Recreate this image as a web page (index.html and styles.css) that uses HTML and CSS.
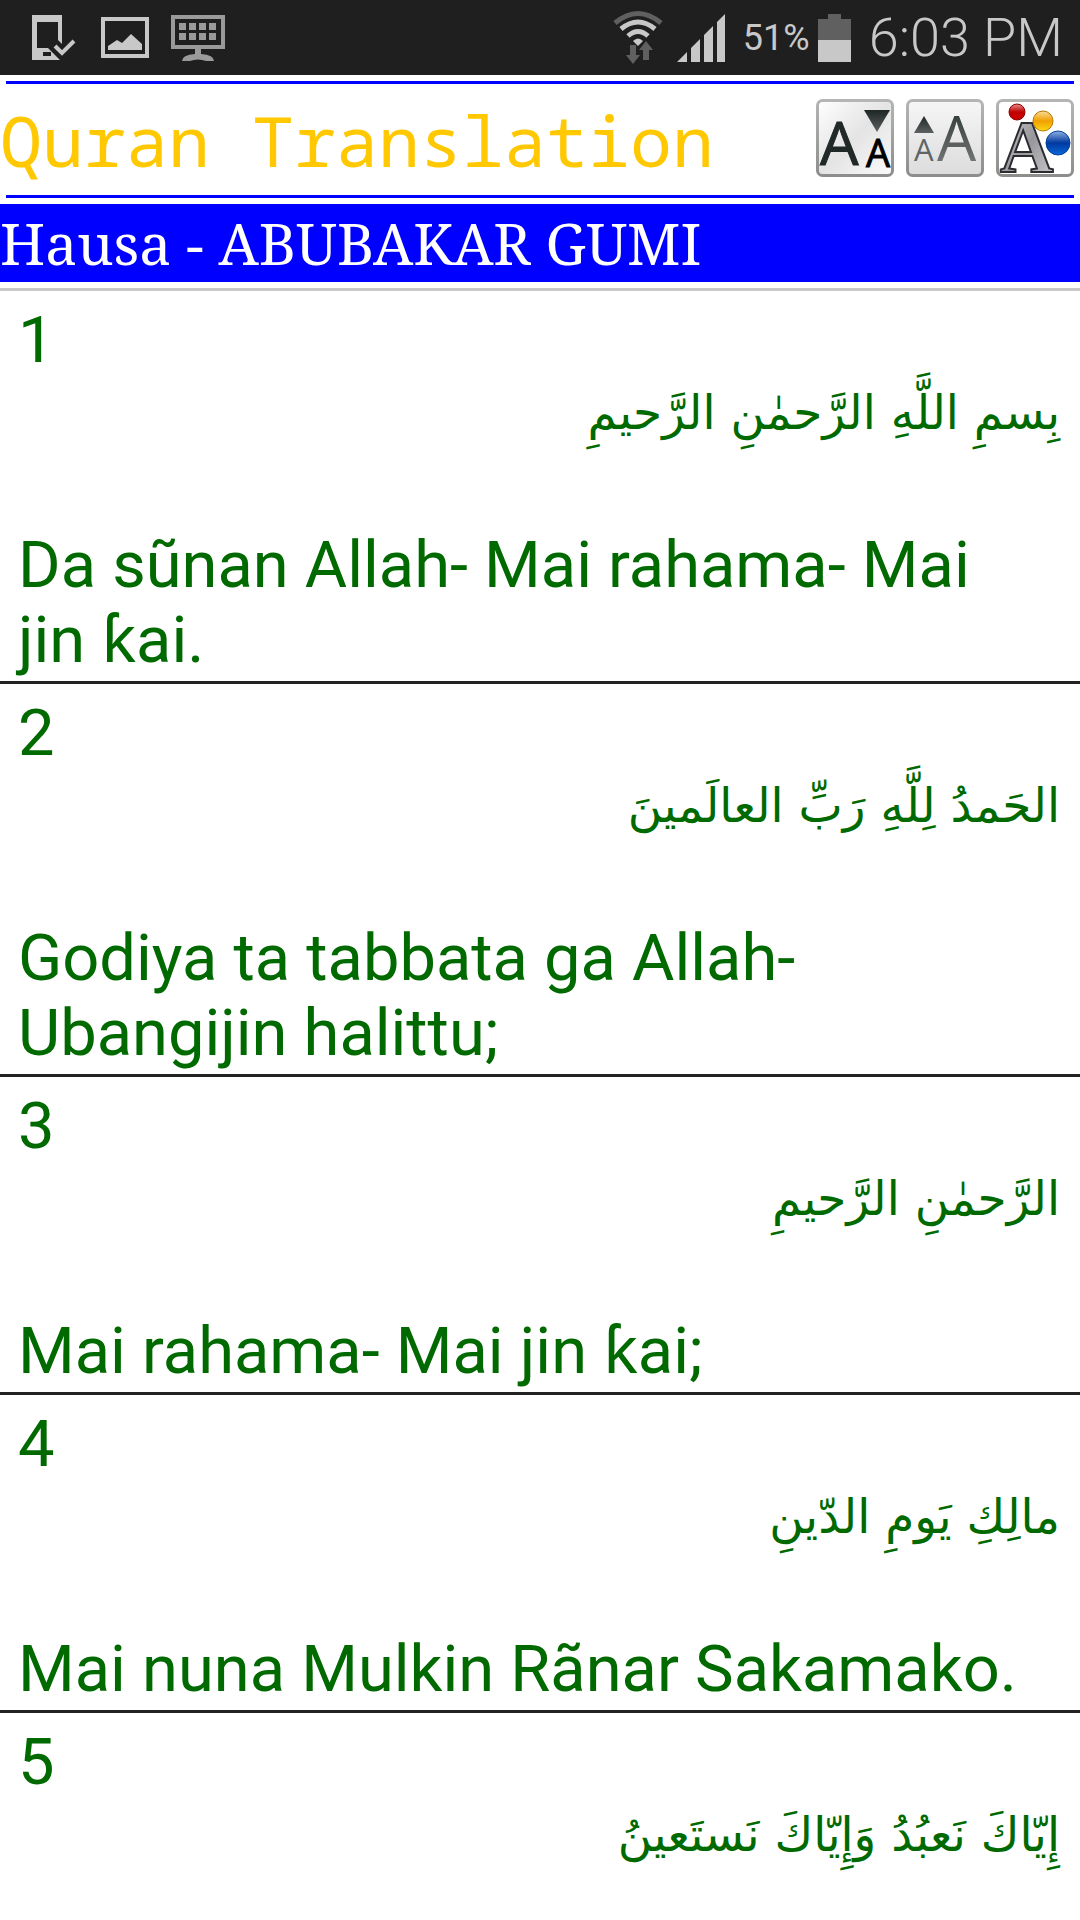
FILE: index.html
```html
<!DOCTYPE html>
<html lang="ha">
<head>
<meta charset="utf-8">
<meta name="viewport" content="width=device-width, initial-scale=1">
<title>Quran Translation</title>
<link rel="stylesheet" href="styles.css">
</head>
<body>
<div class="status">
  <div class="status-group notices">
    <svg width="47" height="46" viewBox="0 0 47 46" aria-hidden="true">
      <path fill="#c8c8c8" fill-rule="evenodd" d="M0 0H30V29L26 25V7H5V33H16L28 45H0ZM11 37V41H19V37Z"/>
      <path fill="none" stroke="#c8c8c8" stroke-width="4" d="M23 31L30 38L42 26"/>
    </svg>
    <svg width="48" height="41" viewBox="0 0 48 41" aria-hidden="true">
      <path fill="#c8c8c8" fill-rule="evenodd" d="M0 0H48V41H0ZM4 4V37H44V4Z"/>
      <path fill="#c8c8c8" d="M7 33V29L16 23L21 26L30 17L41 27V33Z"/>
    </svg>
    <svg width="54" height="46" viewBox="0 0 54 46" aria-hidden="true">
      <path fill="#9a9a9a" fill-rule="evenodd" d="M0 0H54V34H30V39Q43 40 43 46H35Q27 43 19 46H11Q11 40 24 39V34H0ZM4 4V30H50V4Z"/>
      <path fill="#9a9a9a" d="M8 8h7v7h-7zM18 8h7v7h-7zM28 8h7v7h-7zM38 8h7v7h-7zM8 18h7v7h-7zM18 18h7v7h-7zM28 18h7v7h-7zM38 18h7v7h-7z"/>
    </svg>
  </div>
  <div class="status-group">
    <svg class="wifi" width="50" height="54" viewBox="0 0 50 54" aria-hidden="true">
      <path fill="none" stroke="#606060" stroke-width="5" d="M2 12Q25 -7 48 12"/>
      <g fill="none" stroke="#c8c8c8" stroke-width="5">
        <path d="M8 18Q25 4 42 18"/>
        <path d="M15 25Q25 16 35 25"/>
      </g>
      <path fill="#c8c8c8" d="M20 30Q25 25 30 30L25 35Z"/>
      <path fill="#606060" d="M17 34H23V44H27L20 53L13 44H17ZM30 49V39H26L33 30L40 39H36V49Z"/>
    </svg>
    <svg class="signal" width="48" height="48" viewBox="0 0 48 48" aria-hidden="true">
      <path fill="#c8c8c8" d="M0 48L10 38V48ZM14 48V34L23 25V48ZM27 48V21L36 12V48ZM40 48V8L48 0V48Z"/>
    </svg>
    <span class="percent">51%</span>
    <svg class="battery" width="33" height="48" viewBox="0 0 33 48" aria-hidden="true">
      <path fill="#606060" d="M0 5H10V0H23V5H33V26H0Z"/>
      <path fill="#c8c8c8" d="M0 26H33V48H0Z"/>
    </svg>
    <time class="clock">6:03 PM</time>
  </div>
</div>

<header class="header">
  <h1 class="title">Quran Translation</h1>
  <div class="tools">
    <button class="tool" type="button" aria-label="Smaller text">
      <svg width="78" height="78" viewBox="0 0 78 78" aria-hidden="true">
        <defs>
          <linearGradient id="rim" x1="0" y1="0" x2="0" y2="1"><stop offset="0" stop-color="#b4b6b4"/><stop offset="1" stop-color="#8c8e8c"/></linearGradient>
          <linearGradient id="face" x1="0" y1="0" x2="0" y2="1"><stop offset="0" stop-color="#f6f6f6"/><stop offset="1" stop-color="#dcdcdc"/></linearGradient>
          <linearGradient id="shine" x1="0" y1="0" x2="1" y2="1"><stop offset="0" stop-color="#ffffff"/><stop offset="0.5" stop-color="#e4e4e4"/><stop offset="1" stop-color="#fbfbfb"/></linearGradient>
          <linearGradient id="arrow" x1="0" y1="0" x2="0" y2="1"><stop offset="0" stop-color="#1e2626"/><stop offset="1" stop-color="#5c6060"/></linearGradient>
          <linearGradient id="fade" x1="0" y1="0" x2="0" y2="1"><stop offset="0" stop-color="#1e2828"/><stop offset="1" stop-color="#868886"/></linearGradient>
          <linearGradient id="metal" x1="0" y1="0" x2="1" y2="1"><stop offset="0" stop-color="#d8d8da"/><stop offset="0.5" stop-color="#98989c"/><stop offset="1" stop-color="#d0d0d2"/></linearGradient>
          <linearGradient id="red" x1="0" y1="0" x2="0" y2="1"><stop offset="0" stop-color="#e89090"/><stop offset="0.5" stop-color="#c00000"/><stop offset="1" stop-color="#d00000"/></linearGradient>
          <linearGradient id="gold" x1="0" y1="0" x2="0" y2="1"><stop offset="0" stop-color="#f8dc98"/><stop offset="0.5" stop-color="#f0a000"/><stop offset="1" stop-color="#ffd818"/></linearGradient>
          <linearGradient id="blue" x1="0" y1="0" x2="0" y2="1"><stop offset="0" stop-color="#90b0e0"/><stop offset="0.5" stop-color="#0038a0"/><stop offset="1" stop-color="#0868d8"/></linearGradient>
        </defs>
        <rect x="1.500" y="1.500" width="75" height="75" rx="5" fill="url(#shine)" stroke="url(#rim)" stroke-width="3"/>
        <text class="glyph" x="4" y="66" font-size="61" fill="#202828" stroke="#202828">A</text>
        <text class="glyph" x="50" y="68" font-size="38" fill="#000000" stroke="#000000">A</text>
        <path fill="url(#arrow)" d="M48 11H74L61 33Z"/>
      </svg>
    </button>
    <button class="tool" type="button" aria-label="Larger text">
      <svg width="78" height="78" viewBox="0 0 78 78" aria-hidden="true">
        <rect x="1.500" y="1.500" width="75" height="75" rx="5" fill="url(#face)" stroke="url(#rim)" stroke-width="3"/>
        <text class="glyph" x="8" y="62" font-size="31" fill="#606464">A</text>
        <text class="glyph" x="31" y="62" font-size="62" fill="url(#fade)">A</text>
        <path fill="url(#arrow)" d="M8 34H28L18 17Z"/>
      </svg>
    </button>
    <button class="tool" type="button" aria-label="Text colour">
      <svg width="78" height="78" viewBox="0 0 78 78" aria-hidden="true">
        <rect x="1.500" y="1.500" width="75" height="75" rx="5" fill="#ffffff" stroke="url(#rim)" stroke-width="3"/>
        <text class="serif-glyph" x="4" y="73" font-size="74" fill="url(#metal)" stroke="#2c2c30" stroke-width="2">A</text>
        <circle cx="47" cy="22" r="10" fill="url(#gold)" stroke="#b87800" stroke-width="1"/>
        <circle cx="21" cy="13" r="8" fill="url(#red)" stroke="#900000" stroke-width="1"/>
        <circle cx="62" cy="44" r="12" fill="url(#blue)" stroke="#0040a0" stroke-width="1"/>
      </svg>
    </button>
  </div>
</header>

<h2 class="translator">Hausa - ABUBAKAR GUMI</h2>

<main class="verses">
  <article class="verse">
    <p class="number">1</p>
    <p class="arabic" lang="ar" dir="rtl">بِسمِ اللَّهِ الرَّحمٰنِ الرَّحيمِ</p>
    <p class="text">Da sũnan Allah- Mai rahama- Mai jin ƙai.</p>
  </article>
  <article class="verse">
    <p class="number">2</p>
    <p class="arabic" lang="ar" dir="rtl">الحَمدُ لِلَّهِ رَبِّ العالَمينَ</p>
    <p class="text">Godiya ta tabbata ga Allah- Ubangijin halittu;</p>
  </article>
  <article class="verse">
    <p class="number">3</p>
    <p class="arabic" lang="ar" dir="rtl">الرَّحمٰنِ الرَّحيمِ</p>
    <p class="text">Mai rahama- Mai jin ƙai;</p>
  </article>
  <article class="verse">
    <p class="number">4</p>
    <p class="arabic" lang="ar" dir="rtl">مالِكِ يَومِ الدّينِ</p>
    <p class="text">Mai nuna Mulkin Rãnar Sakamako.</p>
  </article>
  <article class="verse">
    <p class="number">5</p>
    <p class="arabic" lang="ar" dir="rtl">إِيّاكَ نَعبُدُ وَإِيّاكَ نَستَعينُ</p>
  </article>
</main>
</body>
</html>
```
FILE: styles.css
```css
* {
  box-sizing: border-box;
}

body {
  margin: 0;
  background: #ffffff;
  color: #006a00;
  font-family: Roboto, "Noto Sans", sans-serif;
}

h1,
h2,
p {
  margin: 0;
  font-weight: 400;
}

svg {
  display: block;
  overflow: visible;
}

.status {
  display: flex;
  justify-content: space-between;
  height: 75px;
  padding: 0 17px 0 32px;
  background: #1f1f1f;
  color: #c8c8c8;
}

.status-group {
  display: flex;
  align-items: center;
}

.notices {
  gap: 22px;
}

.wifi {
  margin-right: 14px;
}

.signal {
  margin-right: 18px;
}

.percent {
  font-size: 36px;
}

.battery {
  margin: 0 18px 0 8px;
}

.clock {
  font-size: 54px;
  font-weight: 300;
}

.header {
  display: flex;
  align-items: center;
  justify-content: space-between;
  height: 117px;
  margin: 6px;
  border-top: 3px solid #0000ff;
  border-bottom: 3px solid #0000ff;
}

.title {
  margin-left: -6px;
  color: #ffc800;
  font-family: "Noto Sans Mono", "Droid Sans Mono", "DejaVu Sans Mono", monospace;
  font-size: 70px;
  line-height: 84px;
  white-space: nowrap;
}

.tools {
  display: flex;
  gap: 12px;
  padding-bottom: 3px;
}

.tool {
  padding: 0;
  border: 0;
  background: none;
}

.glyph {
  font-family: "Open Sans", sans-serif;
}

.serif-glyph {
  font-family: "Liberation Serif", serif;
  font-weight: 700;
}

.translator {
  background: #0000ff;
  color: #ffffff;
  font-family: "Noto Serif", "Droid Serif", "Liberation Serif", serif;
  font-size: 57px;
  line-height: 78px;
}

.verses {
  margin-top: 6px;
  border-top: 3px solid #c8c8c8;
}

.verse {
  padding: 12px 20px 3px 18px;
  border-bottom: 3px solid #222222;
}

.verse:last-child {
  border-bottom: 0;
}

.number,
.text {
  font-size: 65px;
  line-height: 75px;
}

.text {
  padding-right: 20px;
}

.arabic {
  padding-bottom: 81px;
  font-family: "DejaVu Sans", "Noto Sans Arabic", sans-serif;
  font-size: 47px;
  line-height: 69px;
}
```
